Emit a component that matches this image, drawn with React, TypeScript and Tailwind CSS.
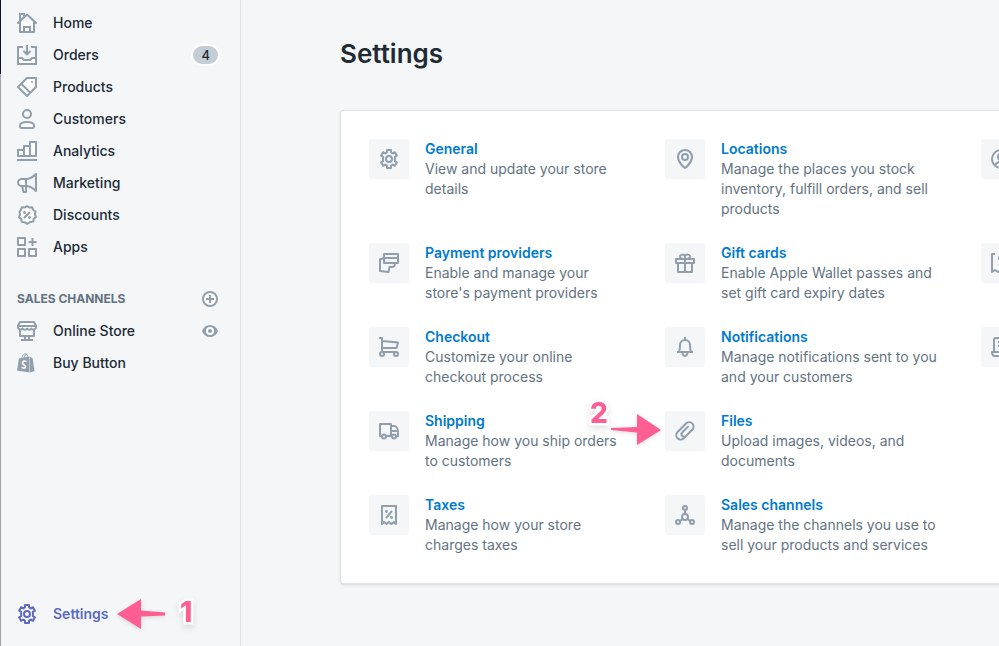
import type { ReactNode } from "react";

const Icon = ({ children }: { children: ReactNode }) => (
  <svg
    viewBox="0 0 20 20"
    className="h-5 w-5 shrink-0"
    fill="none"
    stroke="currentColor"
    strokeWidth="2"
    strokeLinejoin="round"
    aria-hidden="true"
  >
    {children}
  </svg>
);

const gearPath =
  "M8 1h4v2.3l1.9 1.1 2-1.2 2 3.5-2 1.1v4.4l2 1.1-2 3.5-2-1.2-1.9 1.1V19H8v-2.3l-1.9-1.1-2 1.2-2-3.5 2-1.1V7.8l-2-1.1 2-3.5 2 1.2L8 3.3z";

const icons = {
  home: (
    <Icon>
      <path d="M3 9v10h14V9" fill="#fff" />
      <path d="M1 10l9-8.5 9 8.5" strokeLinecap="round" />
      <path d="M3 8V1h4v3M7 19v-5h6v5" strokeLinejoin="miter" />
    </Icon>
  ),
  orders: (
    <Icon>
      <path d="M1 13h4l2 2h6l2-2h4v6H1z" fill="#fff" />
      <path d="M6 2H1v17h18V2h-5M10 0v8M6.500 6L10 9.500 13.500 6" />
    </Icon>
  ),
  products: (
    <Icon>
      <path d="M10 1h9v9l-9 9-9-9z" fill="#fff" />
      <path d="M4.500 7L13 15.500" />
      <circle cx="15" cy="5" r="1" fill="currentColor" stroke="none" />
    </Icon>
  ),
  customers: (
    <Icon>
      <circle cx="10" cy="5" r="4" />
      <path d="M3 16.500C3 14.500 6 13 10 13s7 1.500 7 3.500c0 1-.5 2.500-1.500 2.500h-11C3.500 19 3 17.500 3 16.500z" fill="#fff" />
    </Icon>
  ),
  analytics: (
    <Icon>
      <path d="M1 15V9h6v6zM7 15V5h6v10zM13 15V1h6v14z" fill="#fff" />
      <path d="M0 19h20" />
    </Icon>
  ),
  marketing: (
    <Icon>
      <path d="M5 6h4v7H5a4 3.500 0 0 1 0-7z" fill="#fff" />
      <path d="M9 6c4 0 7-2 10-5v17c-3-3-6-5-10-5M5 13l1.500 6H9v-6" />
    </Icon>
  ),
  discounts: (
    <Icon>
      <path
        d="M10 1l2.400 1.600 2.800-.3 1 2.700 2.400 1.500-.7 2.800 1.100 2.600-2.200 1.800-.5 2.900-2.900.3L10 18.800l-2.400-1.600-2.900-.3-.5-2.900L2 12.200l1.100-2.600-.7-2.800L3.800 5l1-2.700 2.800.3z"
        fill="#fff"
      />
      <path d="M13 7l-6 6" />
      <circle cx="7.500" cy="7.500" r="1.400" fill="currentColor" stroke="none" />
      <circle cx="12.500" cy="12.500" r="1.400" fill="currentColor" stroke="none" />
    </Icon>
  ),
  apps: (
    <Icon>
      <path d="M1 1h7v7H1zM1 12h7v7H1zM12 12h7v7h-7z" fill="#fff" />
      <path d="M15.500 1v8M11.500 5h8" />
    </Icon>
  ),
  store: (
    <Icon>
      <path d="M3 9v6h14V9M8 15v3M12 15v3M4 19h12" />
      <path d="M3 1h14l2 4v1.500a2.500 2.500 0 0 1-4.500 1 2.800 2.800 0 0 1-4.500 0 2.800 2.800 0 0 1-4.500 0A2.500 2.500 0 0 1 1 6.500V5z" fill="#fff" />
      <path d="M1.500 5h17" />
    </Icon>
  ),
  bag: (
    <Icon>
      <path d="M2 5.500L12.500 3.500v16L0 17.500z" fill="currentColor" stroke="none" />
      <path d="M13 4l2.500 1L17.500 18 13 19.500z" fill="currentColor" stroke="none" />
      <path d="M4.500 6C5 2 7.500.5 9 1s2 2 2 4M7 5c.5-2.500 2-4 3.500-4" strokeWidth="1" />
      <path d="M9.500 8.500C7 7.500 5.500 8.500 5.500 10c0 2 3 2 3 3.800 0 1.500-2 1.700-4 .6" stroke="#fff" strokeWidth="1.600" />
    </Icon>
  ),
  gear: (
    <Icon>
      <path d={gearPath} />
      <circle cx="10" cy="10" r="3" />
    </Icon>
  ),
  pin: (
    <Icon>
      <path d="M10 19S3 14 3 8a7 7 0 0 1 14 0c0 6-7 11-7 11z" />
      <circle cx="10" cy="8" r="3" />
    </Icon>
  ),
  account: (
    <Icon>
      <circle cx="10" cy="10" r="9" />
      <circle cx="10" cy="8" r="3" />
      <path d="M4 16.500c1-2.500 3.500-3.500 6-3.500s5 1 6 3.500" />
    </Icon>
  ),
  payment: (
    <Icon>
      <path d="M5 1h14v9H5zM5 5h14" />
      <path d="M5 5L1 6.500V18l8.500 1 1-5h2.500c2 0 3-1.500 3-4" />
    </Icon>
  ),
  gift: (
    <Icon>
      <path d="M1 6h18v4H1zM3 10h14v9H3zM10 6v13M10 6C7 6 5 5.500 5 3.500S9 .5 10 3.500V6c3 0 5-.5 5-2.500s-4-3-5 0" />
    </Icon>
  ),
  billing: (
    <Icon>
      <path d="M4 1H1v18l3-2 3 2 3-2 3 2 3-2 3 2V1h-3M13 4c-3-1.500-5-.5-5 1.500S13 8 13 10s-3 2.500-5 1M10.500 1v12" />
    </Icon>
  ),
  cart: (
    <Icon>
      <path d="M0 1h3v14h13M3 4l16 1.500-1.500 5.500H3" />
      <circle cx="3" cy="17" r="2" />
      <circle cx="17" cy="17" r="2" />
    </Icon>
  ),
  bell: (
    <Icon>
      <path d="M2 15h16M4 15c1-2 1-3 1-7a5 5 0 0 1 10 0c0 4 0 5 1 7M10 0v3M8 15c-1 2 .5 4 2 4s3-2 2-4" />
    </Icon>
  ),
  legal: (
    <Icon>
      <path d="M3 15V3c0-1 1-2 2-2h12v14M1 15h13v2c0 1 1 2 2 2H4c-2 0-3-1-3-4zM7 5h7M7 9h7M19 15v1c0 2-1 3-3 3" />
    </Icon>
  ),
  truck: (
    <Icon>
      <path d="M3 15H1V3h11v12H7M12 5h3c2.500 0 4 3 4 6v4h-1M12 10h7M12 15h1" />
      <circle cx="5" cy="15.500" r="2" />
      <circle cx="15" cy="15.500" r="2" />
    </Icon>
  ),
  taxes: (
    <Icon>
      <path d="M3 1h14v18l-2.300-2-2.300 2L10 17l-2.400 2-2.300-2L3 19zM13 6l-6 7" />
      <circle cx="7.500" cy="6.500" r="1.400" fill="currentColor" stroke="none" />
      <circle cx="12.500" cy="12.500" r="1.400" fill="currentColor" stroke="none" />
    </Icon>
  ),
  clip: (
    <Icon>
      <path d="M11 15l-2.500 2.500a4.400 4.400 0 0 1-6.200-6.200l9-9a4.400 4.400 0 0 1 6.200 6.200L11 15a2.600 2.600 0 0 1-3.700-3.700L13 5.600" strokeLinecap="round" />
    </Icon>
  ),
  channels: (
    <Icon>
      <circle cx="10" cy="3" r="2" />
      <circle cx="10" cy="12" r="3" />
      <circle cx="3" cy="17" r="2" />
      <circle cx="17" cy="17" r="2" />
      <path d="M10 5v4M7.500 14L5 16M12.500 14l2.500 2" />
    </Icon>
  ),
};

type IconName = keyof typeof icons;

const navItems: { label: string; icon: IconName; count?: number }[] = [
  { label: "Home", icon: "home" },
  { label: "Orders", icon: "orders", count: 4 },
  { label: "Products", icon: "products" },
  { label: "Customers", icon: "customers" },
  { label: "Analytics", icon: "analytics" },
  { label: "Marketing", icon: "marketing" },
  { label: "Discounts", icon: "discounts" },
  { label: "Apps", icon: "apps" },
];

// Listed row by row. The last column only holds the tile.
const settings: { title: string; text?: string; icon: IconName }[] = [
  { title: "General", text: "View and update your store details", icon: "gear" },
  { title: "Locations", text: "Manage the places you stock inventory, fulfill orders, and sell products", icon: "pin" },
  { title: "Account", icon: "account" },
  { title: "Payment providers", text: "Enable and manage your store's payment providers", icon: "payment" },
  { title: "Gift cards", text: "Enable Apple Wallet passes and set gift card expiry dates", icon: "gift" },
  { title: "Billing", icon: "billing" },
  { title: "Checkout", text: "Customize your online checkout process", icon: "cart" },
  { title: "Notifications", text: "Manage notifications sent to you and your customers", icon: "bell" },
  { title: "Legal", icon: "legal" },
  { title: "Shipping", text: "Manage how you ship orders to customers", icon: "truck" },
  { title: "Files", text: "Upload images, videos, and documents", icon: "clip" },
  { title: "Taxes", text: "Manage how your store charges taxes", icon: "taxes" },
  { title: "Sales channels", text: "Manage the channels you use to sell your products and services", icon: "channels" },
];

function NavLink({ label, icon, count }: { label: string; icon: IconName; count?: number }) {
  return (
    <a href="#" className="flex h-8 flex-1 items-center gap-4 text-[#919eab]">
      {icons[icon]}
      <span className="flex-1 text-[#212b36]">{label}</span>
      {count !== undefined && (
        <span className="-mr-0.5 rounded-full border-2 border-white bg-[#c4cdd5] px-2 text-[13px] leading-[18px] text-[#212b36]">
          {count}
        </span>
      )}
    </a>
  );
}

function Sidebar() {
  return (
    <nav className="flex w-60 shrink-0 flex-col border-r border-[#dfe3e8] pt-[7px] pr-[22px] pb-4 pl-4 font-medium">
      {navItems.map((item) => (
        <div key={item.label} className="flex">
          <NavLink {...item} />
        </div>
      ))}

      <div className="mt-5 flex h-8 items-center justify-between">
        <h2 className="text-xs font-bold text-[#637381]">SALES CHANNELS</h2>
        <button type="button" aria-label="Add sales channel" className="text-[#919eab]">
          <svg viewBox="0 0 16 16" className="h-4 w-4" fill="none" stroke="currentColor" strokeWidth="2">
            <circle cx="8" cy="8" r="7" fill="#fff" />
            <path d="M8 4v8M4 8h8" />
          </svg>
        </button>
      </div>
      <div className="flex items-center">
        <NavLink label="Online Store" icon="store" />
        <button type="button" aria-label="View your online store" className="text-[#919eab]">
          <svg viewBox="0 0 16 16" className="h-4 w-4" fill="currentColor">
            <path d="M0 8c1.500-4 4.500-6 8-6s6.500 2 8 6c-1.500 4-4.500 6-8 6s-6.500-2-8-6z" />
            <circle cx="8" cy="8" r="3" fill="currentColor" stroke="#fff" strokeWidth="2" />
          </svg>
        </button>
      </div>
      <div className="flex">
        <NavLink label="Buy Button" icon="bag" />
      </div>

      <div className="relative mt-auto text-[#5c6ac4]">
        <a href="#" className="flex h-8 items-center gap-4 font-semibold">
          {icons.gear}
          Settings
        </a>
        <div className="absolute top-0 left-[99px] flex items-start gap-3.5">
          <svg viewBox="0 0 50 34" className="h-[34px] w-[50px] drop-shadow-sm" fill="#ff5e93" aria-hidden="true">
            <path d="M1 16L25 1v11.500l24 2v3l-24 1V31z" />
          </svg>
          <Digit value="1" />
        </div>
      </div>
    </nav>
  );
}

function Digit({ value }: { value: string }) {
  return (
    <span className="text-[28px] leading-7 font-extrabold text-[#ff5e93] drop-shadow-md [-webkit-text-stroke:5px_white] [paint-order:stroke_fill]">
      {value}
    </span>
  );
}

export default function App() {
  return (
    <div className="flex min-h-screen overflow-hidden bg-[#f4f6f8] font-['Inter','Liberation_Sans',sans-serif] text-sm leading-5 text-[#212b36]">
      <div className="w-px shrink-0 bg-[#a3a4a8]">
        <div className="h-[74px] bg-[#0c1323]" />
      </div>
      <Sidebar />
      <main className="min-w-0 flex-1 pt-9 pl-[99px]">
        <h1 className="text-[26px] leading-9 font-semibold">Settings</h1>
        <section className="mt-[38px] w-max min-w-full rounded-[3px] border border-[#dfe3e8] bg-white p-7 shadow-sm">
          <ul className="grid grid-cols-[260px_280px_260px] gap-x-9 gap-y-6">
            {settings.map(({ title, text, icon }) => (
              <li key={title} className={title === "Taxes" ? "col-start-1" : ""}>
                <a href="#" aria-label={text ? undefined : title} className="flex gap-4">
                  <span className="flex h-10 w-10 shrink-0 items-center justify-center rounded-[3px] bg-[#f4f6f8] text-[#919eab]">
                    {icons[icon]}
                  </span>
                  {text && (
                    <span>
                      <span className="block font-semibold text-[#007ace]">{title}</span>
                      <span className="block text-[#637381]">{text}</span>
                    </span>
                  )}
                </a>
                {title === "Files" && (
                  <div className="relative">
                    <div className="absolute -top-[72px] -left-[75px] flex items-start gap-0.5">
                      <Digit value="2" />
                      <svg
                        viewBox="0 0 52 34"
                        className="mt-3.5 h-[34px] w-[52px] drop-shadow-sm"
                        fill="#ff5e93"
                        aria-hidden="true"
                      >
                        <path d="M1 15l26-1V1l24 16-24 15V19.500L1 17z" />
                      </svg>
                    </div>
                  </div>
                )}
              </li>
            ))}
          </ul>
        </section>
      </main>
    </div>
  );
}
